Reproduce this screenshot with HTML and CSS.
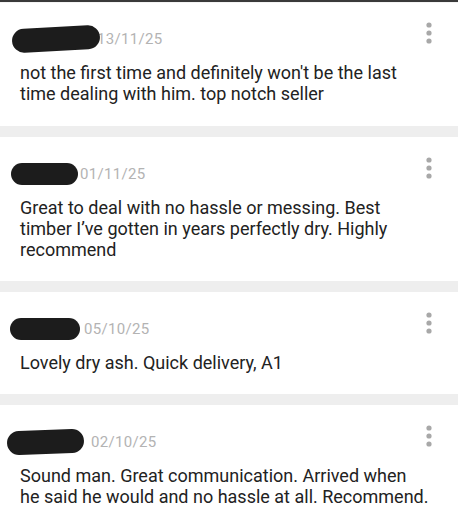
FILE: index.html
```html
<!DOCTYPE html>
<html lang="en">
<head>
    <meta charset="UTF-8">
    <meta name="viewport" content="width=device-width, initial-scale=1.0">
    <title>Reviews</title>
    <link rel="stylesheet" href="styles.css">
</head>
<body>
    <div class="reviews">
        <div class="review first">
            <div class="review-head">
                <span class="name blob-1"></span>
                <span class="date date-1">13/11/25</span>
                <svg class="kebab" width="10" height="22" viewBox="0 0 10 22"><circle cx="5" cy="3" r="2.6"/><circle cx="5" cy="11" r="2.6"/><circle cx="5" cy="19" r="2.6"/></svg>
            </div>
            <p class="review-text">not the first time and definitely won't be the last time dealing with him. top notch seller</p>
        </div>

        <div class="review">
            <div class="review-head">
                <span class="name blob-2"></span>
                <span class="date">01/11/25</span>
                <svg class="kebab" width="10" height="22" viewBox="0 0 10 22"><circle cx="5" cy="3" r="2.6"/><circle cx="5" cy="11" r="2.6"/><circle cx="5" cy="19" r="2.6"/></svg>
            </div>
            <p class="review-text">Great to deal with no hassle or messing. Best timber I’ve gotten in years perfectly dry. Highly recommend</p>
        </div>

        <div class="review">
            <div class="review-head">
                <span class="name blob-3"></span>
                <span class="date">05/10/25</span>
                <svg class="kebab" width="10" height="22" viewBox="0 0 10 22"><circle cx="5" cy="3" r="2.6"/><circle cx="5" cy="11" r="2.6"/><circle cx="5" cy="19" r="2.6"/></svg>
            </div>
            <p class="review-text">Lovely dry ash. Quick delivery, A1</p>
        </div>

        <div class="review">
            <div class="review-head">
                <span class="name blob-4"></span>
                <span class="date">02/10/25</span>
                <svg class="kebab" width="10" height="22" viewBox="0 0 10 22"><circle cx="5" cy="3" r="2.6"/><circle cx="5" cy="11" r="2.6"/><circle cx="5" cy="19" r="2.6"/></svg>
            </div>
            <p class="review-text">Sound man. Great communication. Arrived when he said he would and no hassle at all. Recommend.</p>
        </div>
    </div>
</body>
</html>
```

FILE: styles.css
```css
body {
    margin: 0;
    font-family: 'Roboto', sans-serif;
    background-color: #eeeeee;
}
.reviews {
    border-top: 2px solid #3a3a3a;
    display: flex;
    flex-direction: column;
    gap: 11px;
}
.review {
    background-color: white;
    padding: 25px 20px 21px 20px;
}
.review.first {
    padding-top: 24px;
    padding-bottom: 22px;
    border-top: 1px solid #f4f4f4;
}
.review-head {
    display: flex;
    align-items: center;
    height: 24px;
}
.name {
    display: block;
    height: 24px;
    background-color: #1c1c1c;
    border-radius: 12px;
}
.blob-1 { width: 88px; margin-left: -8px; margin-right: -3px; transform: rotate(-3deg); position: relative; z-index: 1; }
.blob-2 { width: 67px; margin-left: -9px; height: 22px; margin-right: 2px; }
.blob-3 { width: 70px; margin-left: -10px; height: 22px; margin-right: 4px; }
.blob-4 { width: 77px; margin-left: -13px; height: 24px; margin-right: 7px; transform: rotate(-2deg); }
.date {
    font-size: 15px;
    color: #b3b3b3;
    letter-spacing: 0.3px;
}
.kebab {
    margin-left: auto;
    margin-right: 4px;
    margin-top: -12px;
    fill: #a8a8a8;
}
.review-text {
    margin: 11px 0 0 0;
    padding-right: 8px;
    font-size: 18px;
    line-height: 21px;
    color: #222;
}
```
